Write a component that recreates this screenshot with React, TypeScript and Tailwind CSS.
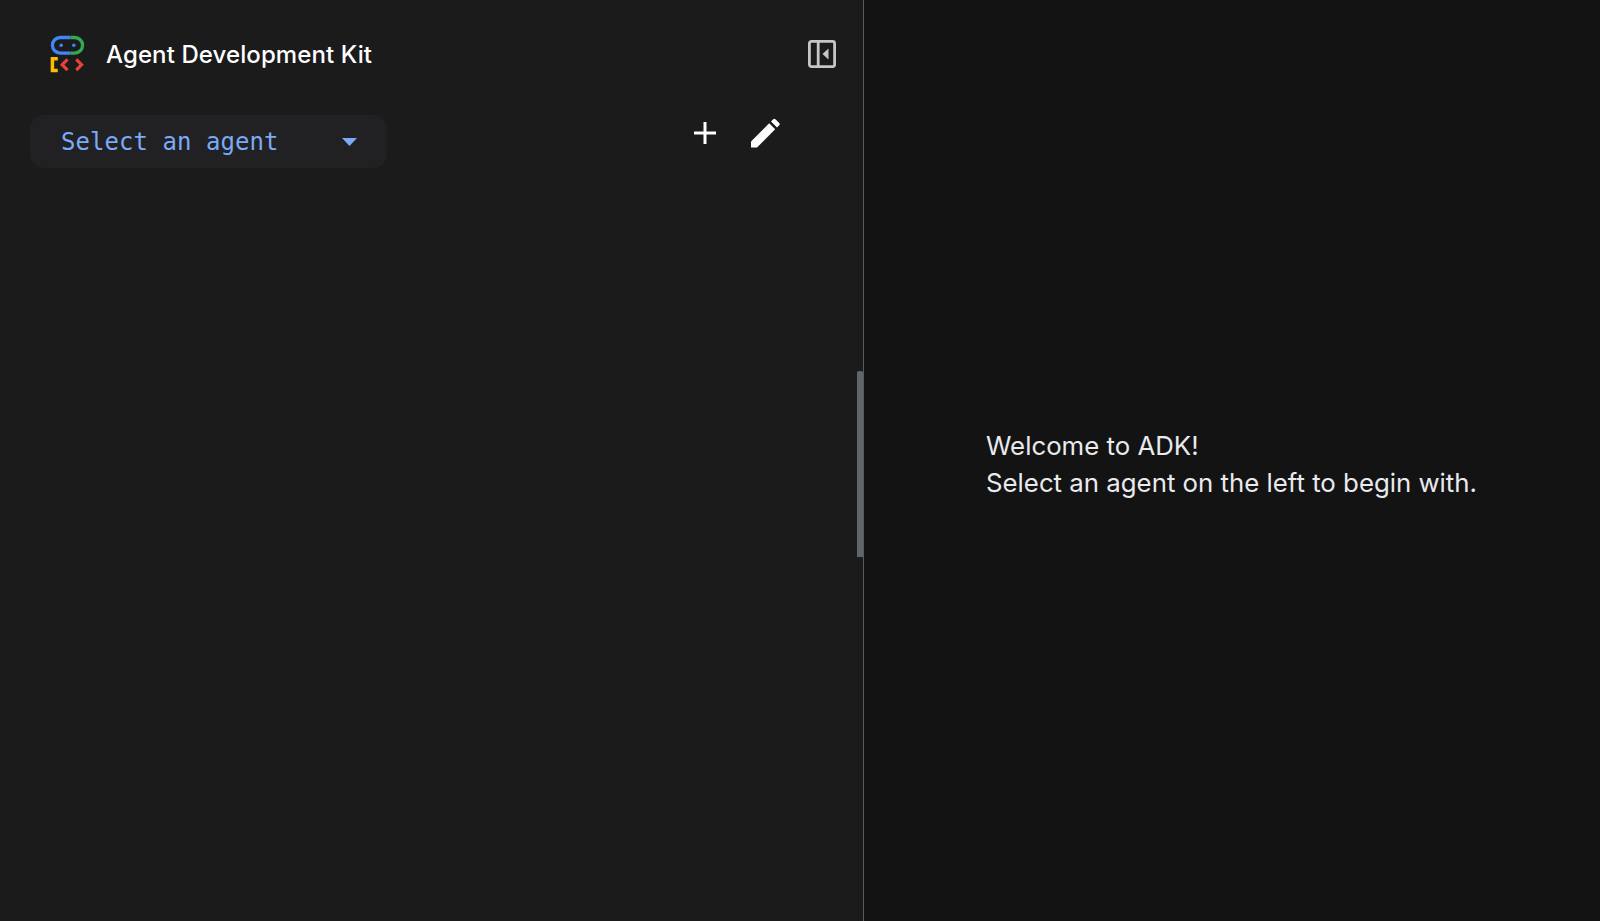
const AdkLogo = () => (
  <svg width="35" height="38" viewBox="0 0 36 38" fill="none">
    <path d="M21 2H10.5a6.5 6.5 0 0 0 0 16H21" stroke="#4285f4" strokeWidth="3.4" />
    <path d="M21 2h4.5a6.5 6.5 0 0 1 0 16H21" stroke="#34a853" strokeWidth="3.4" />
    <circle cx="11.5" cy="10" r="1.8" fill="#4285f4" />
    <circle cx="24.5" cy="10" r="1.8" fill="#4285f4" />
    <path d="M8 24H2.5v12H8" stroke="#fbbc04" strokeWidth="3.6" />
    <path d="M18 24.5 12.5 30l5.5 5.5" stroke="#ea4335" strokeWidth="3.2" />
    <path d="M27 24.5l5.5 5.5-5.5 5.5" stroke="#ea4335" strokeWidth="3.2" />
  </svg>
);

const PanelIcon = () => (
  <svg width="28" height="28" viewBox="0 0 28 28" fill="none">
    <rect x="1.4" y="1.4" width="25.2" height="25.2" rx="2" stroke="#c4c7c5" strokeWidth="2.8" />
    <path d="M10.2 1v26" stroke="#c4c7c5" strokeWidth="2.8" />
    <path d="M20.5 8.5v11L14.5 14z" fill="#c4c7c5" />
  </svg>
);

const PlusIcon = () => (
  <svg width="24" height="24" viewBox="0 0 24 24" fill="none">
    <path d="M12 1v22M1 12h22" stroke="#fff" strokeWidth="3" />
  </svg>
);

const PencilIcon = () => (
  <svg width="30" height="30" viewBox="0 0 30 30" fill="#fff">
    <path d="M1 29.5v-6L19.2 5.3l6 6L7 29.5z" />
    <path d="M21 3.5l2.2-2.2a1.6 1.6 0 0 1 2.2 0l3.8 3.8a1.6 1.6 0 0 1 0 2.2L27 9.5z" />
  </svg>
);

export default function App() {
  return (
    <div className="h-[921px] w-[1600px] overflow-hidden flex bg-[#131314] font-['Inter',sans-serif]">
      <aside className="relative w-[864px] shrink-0 h-full bg-[#1b1b1c] border-r border-[#5a5a5a] flex flex-col">
        <div className="flex items-center pl-[50px] pr-[27px] pt-[18px] h-[90px]">
          <AdkLogo />
          <span className="ml-[21px] mt-[1px] text-[24px] tracking-[0.1px] leading-[36px] font-medium text-white">
            Agent Development Kit
          </span>
          <button className="ml-auto">
            <PanelIcon />
          </button>
        </div>
        <div className="flex items-start pl-[30px] mt-[25px]">
          <div className="w-[357px] h-[53px] rounded-[14px] bg-[#212123] flex items-center pl-[31px] pr-[30px]">
            <span className="text-[24px] tracking-[0.05px] text-[#7baaf7] font-['DejaVu_Sans_Mono',monospace]">Select an agent</span>
            <svg className="ml-auto" width="15" height="8" viewBox="0 0 15 8">
              <path d="M0 0h15L7.5 8z" fill="#7baaf7" />
            </svg>
          </div>
          <div className="ml-[306px] mt-[3px] flex items-center gap-[33px]">
            <PlusIcon />
            <PencilIcon />
          </div>
        </div>
        <div className="absolute right-0 top-[371px] w-[6px] h-[186px] rounded-t-[2px] bg-[#60646b]" />
      </aside>
      <main className="flex-1 flex items-center pl-[122px]">
        <p className="text-[25.8px] leading-[37px] text-[#e8eaed] mt-[6px]">
          Welcome to ADK!
          <br />
          Select an agent on the left to begin with.
        </p>
      </main>
    </div>
  );
}
